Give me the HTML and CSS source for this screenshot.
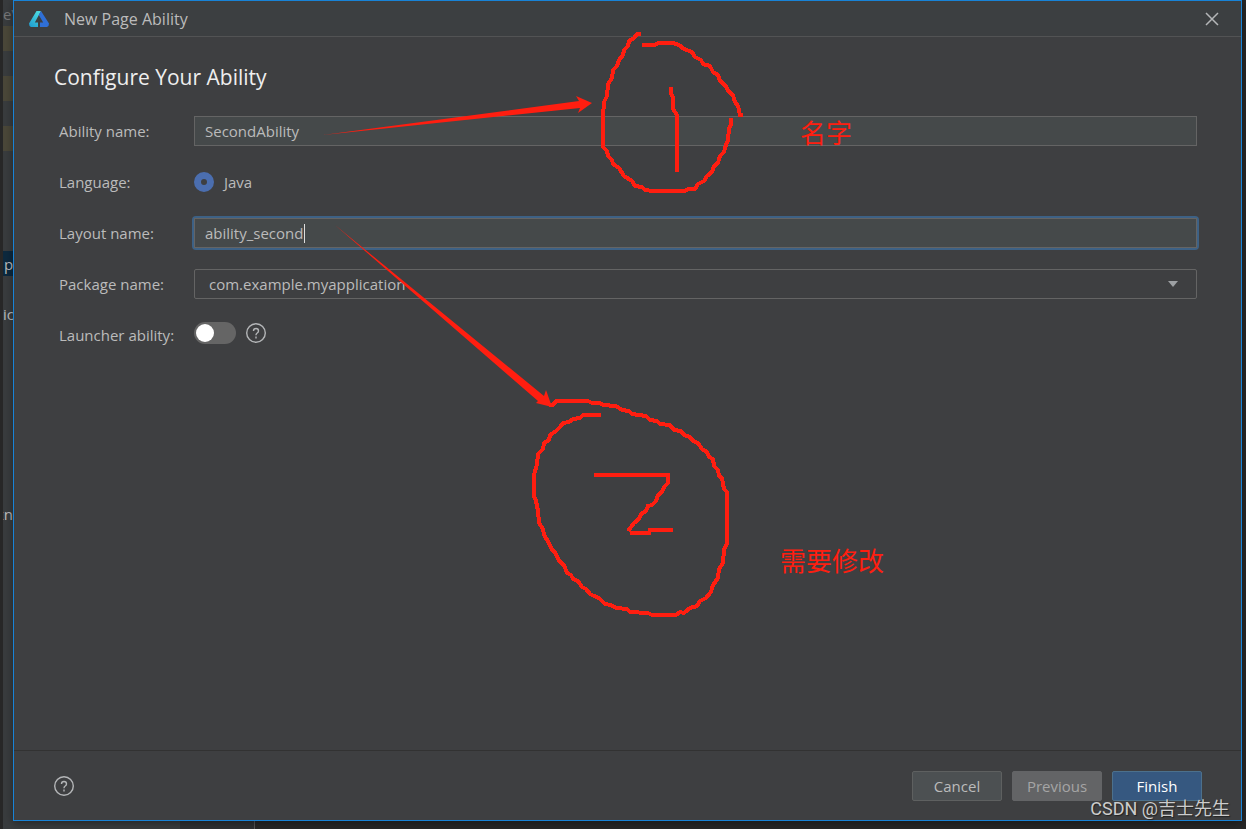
FILE: index.html
```html
<!DOCTYPE html>
<html lang="en">
<head>
    <meta charset="UTF-8">
    <meta name="viewport" content="width=device-width, initial-scale=1.0">
    <title>New Page Ability</title>
    <link rel="stylesheet" href="styles.css">
</head>
<body>
    <!-- editor window behind the dialog -->
    <div class="editor">
        <div class="project-tree">
            <span class="tree-row tree-dim">eV</span>
            <span class="tree-row tree-changed"></span>
            <span class="tree-row"></span>
            <span class="tree-row tree-changed"></span>
            <span class="tree-row"></span>
            <span class="tree-row tree-changed"></span>
            <span class="tree-row"></span>
            <span class="tree-row"></span>
            <span class="tree-row"></span>
            <span class="tree-row"></span>
            <span class="tree-row tree-selected">p</span>
            <span class="tree-row"></span>
            <span class="tree-row">ic</span>
            <span class="tree-row"></span>
            <span class="tree-row"></span>
            <span class="tree-row"></span>
            <span class="tree-row"></span>
            <span class="tree-row"></span>
            <span class="tree-row"></span>
            <span class="tree-row"></span>
            <span class="tree-row tree-xml">xn</span>
        </div>
        <div class="gutter"></div>
    </div>

    <main class="dialog">
        <header class="title-bar">
            <svg class="logo" viewBox="0 0 20 16" width="20" height="16" aria-hidden="true">
                <defs>
                    <linearGradient id="logo-left" x1="0" y1="1" x2="0.6" y2="0">
                        <stop offset="0" stop-color="#1c9bd0"/>
                        <stop offset="1" stop-color="#4ad6de"/>
                    </linearGradient>
                </defs>
                <path d="M7.500 0h4.500L5.800 11.500H9V16H2Q0 15.500 0 12.500z" fill="url(#logo-left)"/>
                <path d="M12 0L20 12.500Q20 15.500 18 16H11v-4.500h3.200L9.800 4z" fill="#2f6fd6"/>
            </svg>
            <span class="window-title">New Page Ability</span>
            <button class="close" type="button" aria-label="Close">
                <svg viewBox="0 0 14 14" width="14" height="14"><path d="M1 1l12 12M13 1L1 13" fill="none" stroke="#b4b6b8" stroke-width="1.500"/></svg>
            </button>
        </header>

        <form class="content" id="ability-form">
            <h1>Configure Your Ability</h1>
            <div class="fields">
                <label for="ability-name">Ability name:</label>
                <input class="text-field" id="ability-name" type="text" value="SecondAbility">

                <span id="language-label">Language:</span>
                <div class="row" role="radiogroup" aria-labelledby="language-label">
                    <input class="radio" id="java" type="radio" name="language" checked>
                    <label for="java">Java</label>
                </div>

                <label for="layout-name">Layout name:</label>
                <div class="active-field">
                    <input class="text-field" id="layout-name" type="text" value="ability_second">
                    <span class="caret"></span>
                </div>

                <label for="package-name">Package name:</label>
                <div class="select-box">
                    <select id="package-name">
                        <option>com.example.myapplication</option>
                    </select>
                </div>

                <label for="launcher">Launcher ability:</label>
                <div class="row launcher-row">
                    <input class="switch" id="launcher" type="checkbox">
                    <button class="help" type="button" aria-label="About launcher ability">
                        <svg viewBox="0 0 20 20" width="20" height="20"><circle cx="10" cy="10" r="9.300"/><path d="M7.500 8Q7.500 5.500 10 5.500T12.500 8Q12.500 9.200 11.200 10T10 12.300M10 13.500v2"/></svg>
                    </button>
                </div>
            </div>
        </form>

        <footer class="actions">
            <button class="help" type="button" aria-label="Help">
                <svg viewBox="0 0 20 20" width="20" height="20"><circle cx="10" cy="10" r="9.300"/><path d="M7.500 8Q7.500 5.500 10 5.500T12.500 8Q12.500 9.200 11.200 10T10 12.300M10 13.500v2"/></svg>
            </button>
            <div class="buttons">
                <button class="btn" type="button">Cancel</button>
                <button class="btn btn-disabled" type="button" disabled>Previous</button>
                <button class="btn btn-primary" type="submit" form="ability-form">Finish</button>
            </div>
        </footer>
    </main>

    <!-- red pen notes -->
    <svg class="notes" width="1000" height="640" viewBox="0 0 1000 640">
        <g class="arrows">
            <path d="M323 135L579 101L576 96L592 103L578 113L580 108z"/>
            <path d="M335 225L544 396L546 390L552 407L536 403L538 401z"/>
        </g>
        <g class="pen">
            <path d="M641 34H637L634 38L629 41L628 46L624 50L623 55L619 60L617 66L613 70L612 78L608 84L607 96L604 102L603 116V147L607 151L608 156L612 160L613 164L619 168L624 176L632 181L635 186L642 187L645 190L653 191H685L688 189L695 189L698 184L704 181L707 176L712 172L714 166L718 163L720 156L724 152L726 145L728 140L729 129L731 124V118"/>
            <path d="M642 45H655L658 43H673L679 45L684 49L692 52L695 57L701 60L703 64L710 66L713 72L718 75L720 81L726 86L728 91L733 95L735 102L738 106L740 115H743"/>
            <path d="M671 87V93L673 98V109L677 115V172"/>
            <path d="M549 405H553L556 401H588L592 403L600 403L603 405L616 406L622 410L629 411L632 414L646 416L650 420L657 421L660 424L670 425L674 430L681 431L684 435L690 437L693 441L698 443L702 449L707 452L709 457L713 459L714 466L718 470L719 476L722 478L724 489L727 492V543L724 550L723 563L719 569L718 578L713 585L711 592L706 598L700 601L697 606L690 608L684 613L680 612L676 615H652L648 613L630 612L627 609L616 608L611 605L605 604L599 598L594 596L590 594L586 589L582 587L578 581L573 579L571 575L567 573L564 565L559 561L556 554L551 548L549 543L544 535L543 529L539 523L538 511L536 501L534 496V475L537 464L538 454L543 449L544 443L549 440L550 435L556 431L560 427L563 423L569 422L573 419L580 418L583 415H601"/>
            <path d="M594 475H668V483L664 487L662 492L658 495L656 501L652 505L648 506L646 511L641 514L639 519L634 523L628 531M630 533H649L650 530H673"/>
        </g>
        <text x="800" y="143">名字</text>
        <text x="780" y="571">需要修改</text>
    </svg>
    <span class="watermark">CSDN @吉士先生</span>
</body>
</html>
```
FILE: styles.css
```css
* {
    box-sizing: border-box;
}

body {
    margin: 0;
    min-height: 100vh;
    display: flex;
    position: relative;
    overflow: hidden;
    background-color: #272727;
    color: #bbbbbb;
    font-family: "Open Sans", "Noto Sans", sans-serif;
    font-size: 15px;
    line-height: 20px;
}

button,
input,
select {
    font: inherit;
    color: inherit;
}

/* editor behind the dialog */
.editor {
    position: absolute;
    inset: 0;
    display: flex;
    padding-left: 3px;
}

.project-tree {
    width: 177px;
    padding-top: 1px;
    background-color: #393c3e;
}

.gutter {
    width: 75px;
    background-color: #2e3032;
    border-right: 1px solid #555555;
}

.tree-row {
    display: block;
    height: 25px;
    line-height: 26px;
}

.tree-dim {
    color: #777777;
}

.tree-changed {
    background-color: #4a4739;
}

.tree-selected {
    background-color: #0d293e;
    padding-left: 1px;
}

.tree-xml {
    width: 10px;
    overflow: hidden;
    direction: rtl;
}

/* dialog */
.dialog {
    position: relative;
    flex: 1;
    display: flex;
    flex-direction: column;
    margin: 0 4px 8px 13px;
    border: 1px solid #1883d7;
    background-color: #3e3f41;
    box-shadow: 0 2px 8px rgba(0, 0, 0, 0.4);
}

.title-bar {
    display: flex;
    align-items: center;
    height: 36px;
    padding: 0 20px 0 15px;
    background-color: #3c3f41;
    border-bottom: 1px solid #525354;
}

.window-title {
    flex: 1;
    margin-left: 15px;
    font-size: 16px;
}

.close {
    display: flex;
    padding: 2px;
    border: 0;
    background: none;
}

.content {
    flex: 1;
    padding: 26px 44px 26px 40px;
}

h1 {
    margin: 0;
    color: #eeeeee;
    font-size: 21px;
    font-weight: normal;
    line-height: 28px;
}

.fields {
    display: grid;
    grid-template-columns: 135px 1fr;
    grid-auto-rows: 30px;
    row-gap: 21px;
    align-items: center;
    margin-top: 25px;
    padding-left: 5px;
}

.row {
    display: flex;
    align-items: center;
    gap: 10px;
}

.text-field {
    display: block;
    width: 100%;
    height: 30px;
    padding: 0 10px;
    border: 1px solid #646464;
    background-color: #45494a;
    outline: none;
}

.active-field {
    position: relative;
    border-radius: 2px;
    box-shadow: 0 0 0 2px #3d6185;
}

.caret {
    position: absolute;
    left: 110px;
    top: 6px;
    width: 1px;
    height: 19px;
    background-color: #dddddd;
}

.radio {
    appearance: none;
    width: 20px;
    height: 20px;
    margin: 0;
    border: 7px solid #4b6eaf;
    border-radius: 50%;
}

.select-box {
    position: relative;
}

.select-box select {
    appearance: none;
    display: block;
    width: 100%;
    height: 30px;
    padding: 0 14px;
    border: 1px solid #646464;
    border-radius: 2px;
    background-color: #3e3f41;
}

.select-box::after {
    content: "";
    position: absolute;
    right: 19px;
    top: 12px;
    border: 5px solid transparent;
    border-top: 6px solid #9da0a3;
    border-bottom: 0;
    pointer-events: none;
}

.launcher-row {
    padding-bottom: 4px;
}

.switch {
    appearance: none;
    width: 42px;
    height: 22px;
    margin: 0;
    padding: 2px;
    border-radius: 11px;
    background-color: #656565;
}

.switch::before {
    content: "";
    display: block;
    width: 18px;
    height: 18px;
    border-radius: 50%;
    background-color: #ffffff;
}

.help {
    display: flex;
    padding: 0;
    border: 0;
    background: none;
}

.help svg {
    fill: none;
    stroke: #b4b6b8;
    stroke-width: 1.4;
}

.actions {
    display: flex;
    align-items: center;
    justify-content: space-between;
    height: 70px;
    padding: 0 39px 0 40px;
    border-top: 1px solid #323232;
}

.buttons {
    display: flex;
    gap: 10px;
}

.btn {
    width: 90px;
    height: 30px;
    padding: 0;
    border: 1px solid #5e6060;
    border-radius: 2px;
    background-color: #4c5052;
}

.btn-disabled {
    border-color: #636466;
    background-color: #636466;
    color: #a5a5a5;
}

.btn-primary {
    border-color: #4c708c;
    background-color: #365880;
    color: #ffffff;
}

/* annotations on top */
.notes {
    position: absolute;
    left: 0;
    top: 0;
    pointer-events: none;
}

.notes text {
    fill: #ff1e10;
    font-family: "Noto Sans CJK SC", sans-serif;
    font-size: 26px;
}

.arrows {
    fill: #ff1e10;
}

.pen {
    fill: none;
    stroke: #ff1e10;
    stroke-width: 4;
    shape-rendering: crispEdges;
}

.watermark {
    position: absolute;
    right: 16px;
    bottom: 9px;
    color: #cccccc;
    font-family: Roboto, "Noto Sans CJK SC", sans-serif;
    font-size: 18px;
    line-height: 22px;
    text-shadow: 1px 1px 1px #222222;
}
```
